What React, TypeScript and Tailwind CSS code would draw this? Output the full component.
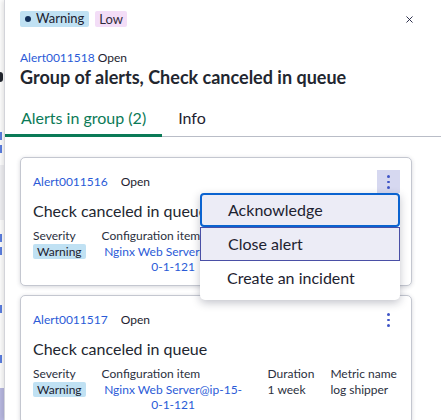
import { X } from 'lucide-react';

const font = { fontFamily: 'Lato, "Open Sans", sans-serif' };

function Kebab({ active = false }: { active?: boolean }) {
  return (
    <div className={`w-[23px] h-[24px] flex flex-col items-center justify-center gap-[3px] ${active ? 'bg-[#d6d8f0]' : ''}`}>
      <span className="w-[2.5px] h-[2.5px] rounded-full bg-[#3f55c6]" />
      <span className="w-[2.5px] h-[2.5px] rounded-full bg-[#3f55c6]" />
      <span className="w-[2.5px] h-[2.5px] rounded-full bg-[#3f55c6]" />
    </div>
  );
}

function Field({ label, children, className = '' }: { label: string; children: React.ReactNode; className?: string }) {
  return (
    <div className={`flex flex-col ${className}`}>
      <span className="text-[12px] leading-[16px] text-[#2b3040]">{label}</span>
      {children}
    </div>
  );
}

function AlertCard({ id, menuOpen = false }: { id: string; menuOpen?: boolean }) {
  return (
    <div className="w-[392px] rounded-[5px] border border-[#c4c7d0] bg-white pl-[12px] pr-[11px] pt-[12px] pb-[11px] shadow-[0_1px_4px_rgba(30,35,60,0.18)]">
      <div className="flex items-center h-[24px]">
        <span className="text-[12px] text-[#2b5bd7]">{id}</span>
        <span className="ml-[13px] text-[12px] text-[#1d2230]">Open</span>
        <div className="ml-auto">
          <Kebab active={menuOpen} />
        </div>
      </div>
      <div className="mt-[6px] text-[16px] leading-[22px] text-[#22262f]">Check canceled in queue</div>
      <div className="mt-[6px] flex gap-4">
        <Field label="Severity">
          <span className="self-start h-[15px] px-[4px] rounded-[2px] bg-[#c0e1f3] text-[12px] leading-[15px] text-[#1d2230]">
            Warning
          </span>
        </Field>
        <Field label="Configuration item" className="w-[150px]">
          <span className="pr-[7px] text-center text-[12px] leading-[15px] text-[#2b5bd7]">
            Nginx Web Server@ip-15-0-1-121
          </span>
        </Field>
        {/* under the open menu these columns are hidden */}
        {!menuOpen && (
          <>
            <Field label="Duration">
              <span className="text-[12px] leading-[15px] text-[#2b3040]">1 week</span>
            </Field>
            <Field label="Metric name">
              <span className="text-[12px] leading-[15px] text-[#2b3040]">log shipper</span>
            </Field>
          </>
        )}
      </div>
    </div>
  );
}

export default function App() {
  return (
    <div className="relative w-[441px] h-[420px] overflow-hidden bg-white flex" style={font}>
      {/* page behind the panel */}
      <div className="w-[4px] shrink-0 flex flex-col bg-white">
        <div className="h-[72px]" />
        <div className="h-[10px] w-[3px] bg-[#22262f] rounded-r-sm" />
        <div className="h-[50px]" />
        <div className="h-[8px] w-[2px] bg-[#5b7ee0]" />
        <div className="h-[5px]" />
        <div className="h-[8px] w-[2px] bg-[#5b7ee0]" />
        <div className="h-[12px]" />
        <div className="h-[55px] bg-[#f1f1f4]" />
        <div className="h-[14px]" />
        <div className="h-[8px] w-[2px] bg-[#5b7ee0]" />
        <div className="h-[5px]" />
        <div className="h-[8px] w-[2px] bg-[#5b7ee0]" />
        <div className="h-[50px]" />
        <div className="h-[8px] w-[2px] bg-[#5b7ee0]" />
        <div className="h-[42px]" />
        <div className="h-[8px] w-[2px] bg-[#5b7ee0]" />
        <div className="h-[25px]" />
        <div className="flex-1 bg-[#b9b9e2]" />
      </div>

      {/* side panel */}
      <div className="flex-1 flex flex-col border-l border-[#d3d4da] bg-white shadow-[-2px_0_5px_rgba(0,0,0,0.12)]">
        <div className="flex items-center pt-[11px] pl-[15px] pr-[26px]">
          <span className="flex items-center h-[16px] px-[5px] rounded-[2px] bg-[#c0e1f3] text-[13px] text-[#1d2230]">
            <span className="w-[6px] h-[6px] rounded-full bg-[#13305a] mr-[5px]" />
            Warning
          </span>
          <span className="ml-[6px] h-[16px] px-[4px] rounded-[2px] bg-[#f3ddf7] text-[13px] leading-[16px] text-[#2f2a3a]">
            Low
          </span>
          <X size={11} strokeWidth={2} className="ml-auto text-[#1b1f3d]" />
        </div>

        <div className="mt-[23px] pl-[15px] text-[12px] leading-[16px]">
          <span className="text-[#2b5bd7]">Alert0011518</span>
          <span className="ml-[3px] text-[#1d2230]">Open</span>
        </div>
        <h1 className="pl-[15px] text-[18px] leading-[22px] font-bold text-[#22262f]">
          Group of alerts, Check canceled in queue
        </h1>

        <div className="mt-[20px] flex border-b border-[#b9bdc7]">
          <div className="-mb-px px-4 pb-[5px] border-b-[3px] border-[#0b7a57] text-[16px] leading-[20px] text-[#0b7a57]">
            Alerts in group (2)
          </div>
          <div className="px-4 pb-[8px] text-[16px] leading-[20px] text-[#1d2230]">Info</div>
        </div>

        <div className="mt-[20px] pl-[15px] flex flex-col gap-[9px]">
          <AlertCard id="Alert0011516" menuOpen />
          <AlertCard id="Alert0011517" />
        </div>
      </div>

      {/* actions menu */}
      <div className="absolute left-[200px] top-[193px] w-[200px] pb-[6px] bg-white rounded-b-[5px] shadow-[0_3px_8px_rgba(20,25,50,0.25)] text-[16px] text-[#1d2230]">
        <div className="h-[34px] flex items-center pl-[26px] rounded-[4px] border-2 border-[#0b63d0] bg-[#ececf6]">
          Acknowledge
        </div>
        <div className="h-[34px] flex items-center pl-[27px] border border-[#4a4fa6] bg-[#ececf6]">
          Close alert
        </div>
        <div className="h-[33px] flex items-center pl-[27px]">Create an incident</div>
      </div>
    </div>
  );
}
